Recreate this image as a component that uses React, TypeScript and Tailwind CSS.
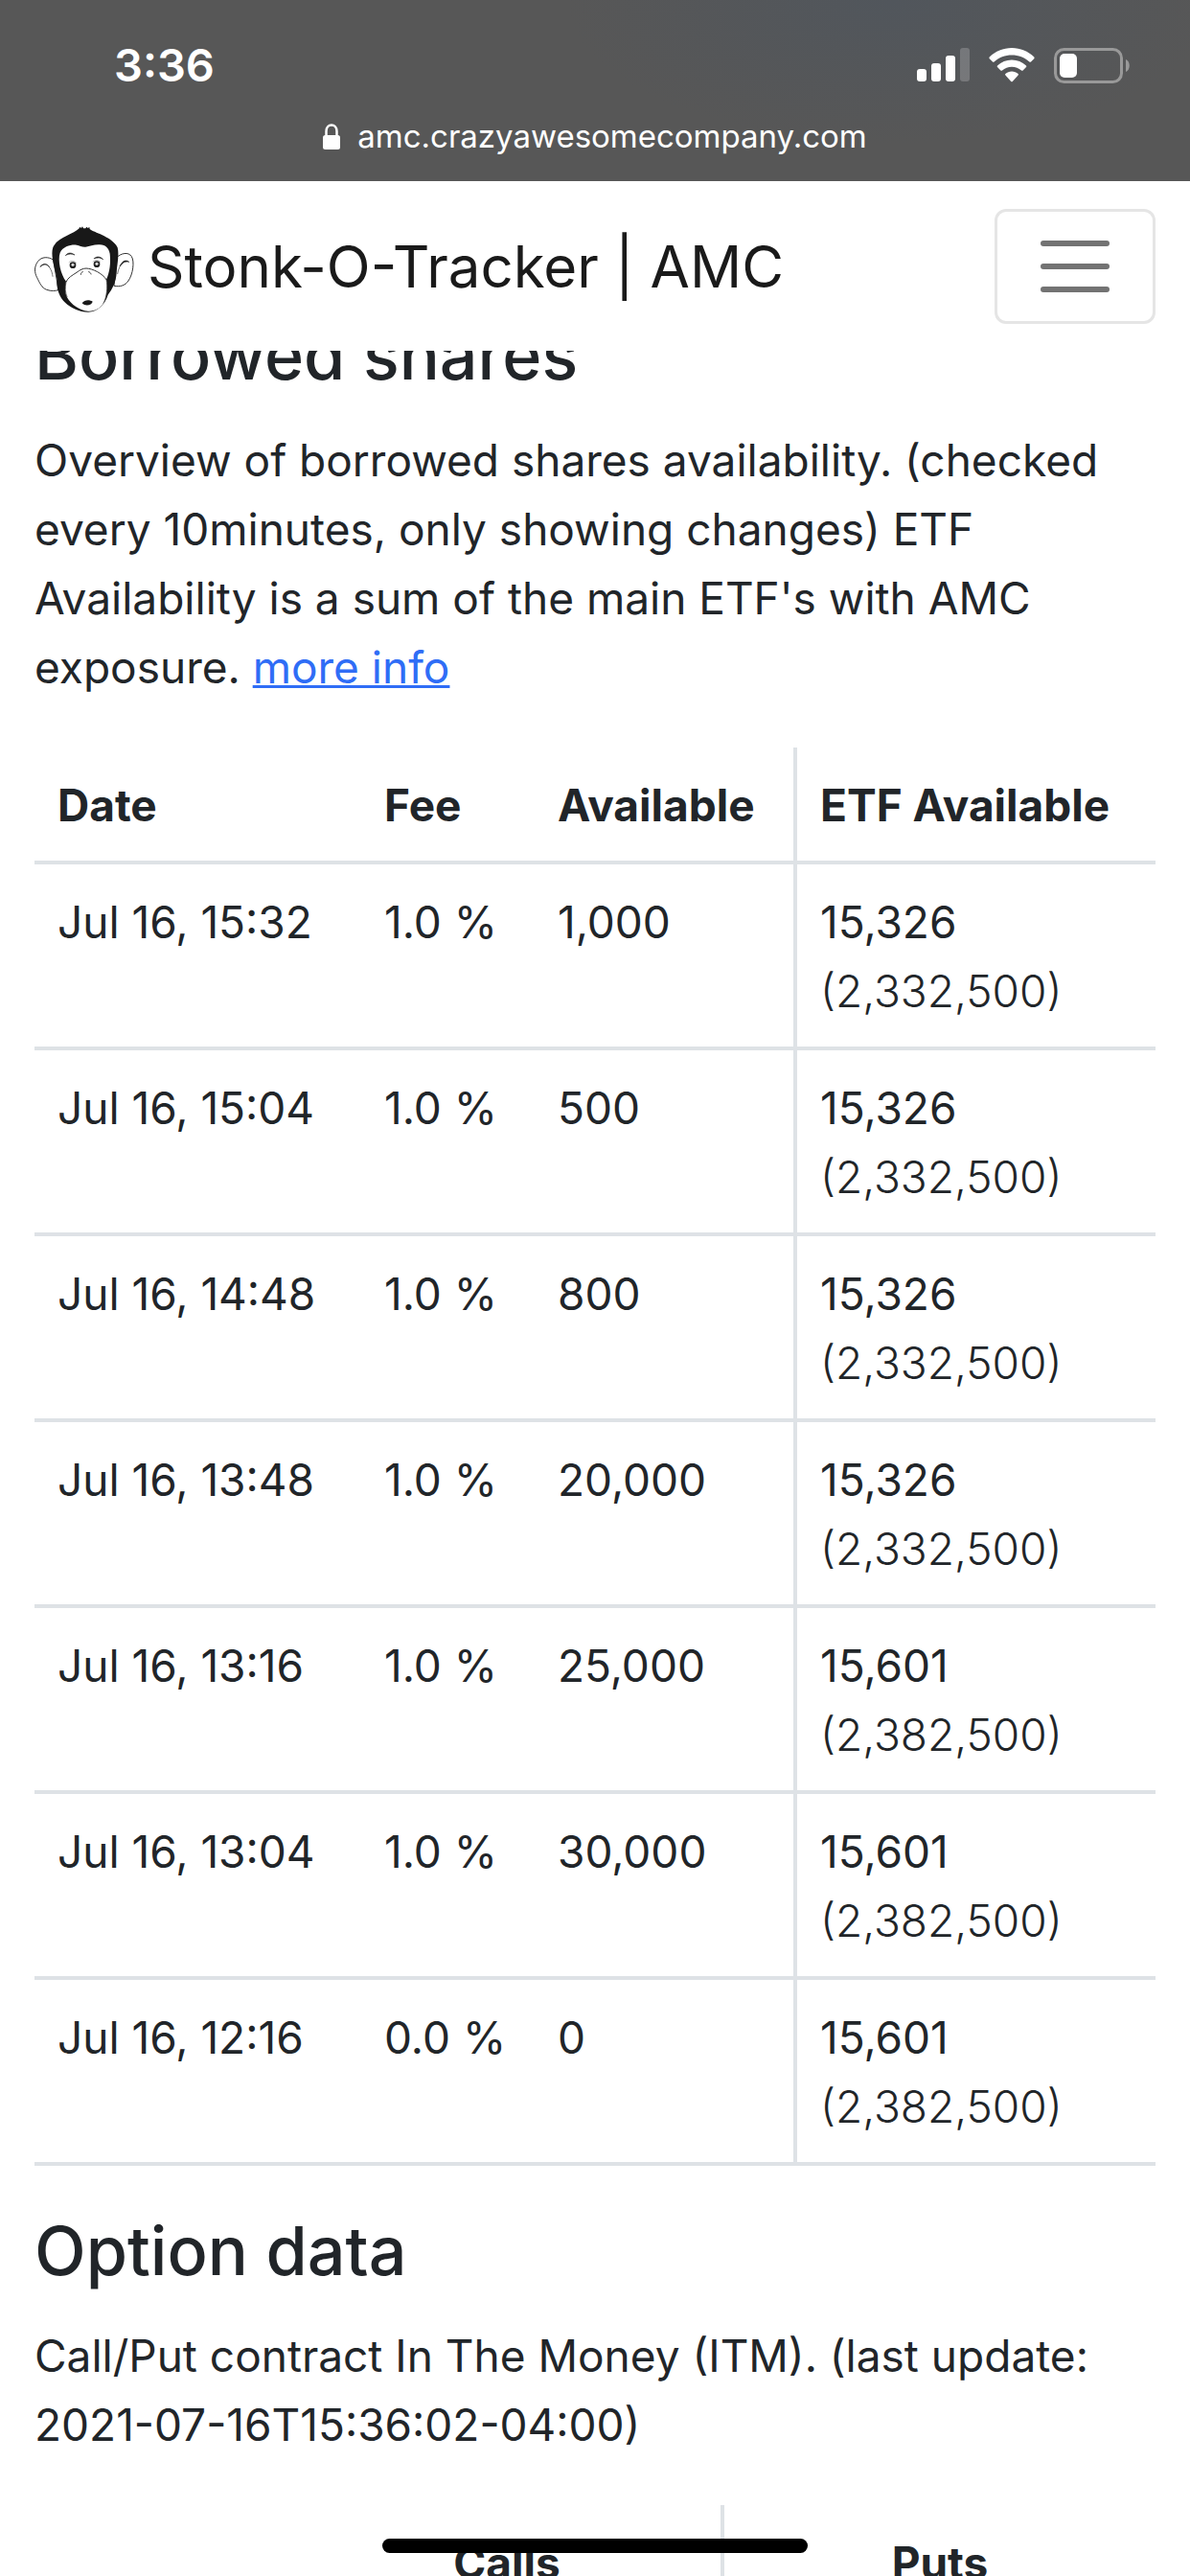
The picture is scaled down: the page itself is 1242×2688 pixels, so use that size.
import React from "react"

type BorrowRow = {
  date: string
  fee: string
  available: string
  etf: string
  etfTotal: string
}

const rows: BorrowRow[] = [
  { date: "Jul 16, 15:32", fee: "1.0 %", available: "1,000", etf: "15,326", etfTotal: "(2,332,500)" },
  { date: "Jul 16, 15:04", fee: "1.0 %", available: "500", etf: "15,326", etfTotal: "(2,332,500)" },
  { date: "Jul 16, 14:48", fee: "1.0 %", available: "800", etf: "15,326", etfTotal: "(2,332,500)" },
  { date: "Jul 16, 13:48", fee: "1.0 %", available: "20,000", etf: "15,326", etfTotal: "(2,332,500)" },
  { date: "Jul 16, 13:16", fee: "1.0 %", available: "25,000", etf: "15,601", etfTotal: "(2,382,500)" },
  { date: "Jul 16, 13:04", fee: "1.0 %", available: "30,000", etf: "15,601", etfTotal: "(2,382,500)" },
  { date: "Jul 16, 12:16", fee: "0.0 %", available: "0", etf: "15,601", etfTotal: "(2,382,500)" },
]

const SignalIcon = () => (
  <svg width="55" height="36" viewBox="0 0 55 36" fill="#fff">
    <rect x="0" y="22" width="10" height="13" rx="3" />
    <rect x="15" y="16" width="10" height="19" rx="3" />
    <rect x="30" y="8" width="10" height="27" rx="3" />
    <rect x="45" y="0" width="10" height="35" rx="3" fillOpacity="0.2" />
  </svg>
)

const WifiIcon = () => (
  <svg width="48" height="36" viewBox="0 0 48 36" fill="#fff">
    <path d="M24 0C33 0 41 3.500 47.300 9.500Q48 10.300 47.300 11.200L44 14.500Q43.200 15.200 42.400 14.500C37.500 10 31 7.500 24 7.500S10.500 10 5.600 14.500Q4.800 15.200 4 14.500L.7 11.200Q0 10.300 .7 9.500C7 3.500 15 0 24 0Z" />
    <path d="M24 12.500C29.700 12.500 35 14.600 39 18.500Q39.800 19.300 39 20.100L35.600 23.500Q34.800 24.200 34 23.500C31.300 21.200 27.800 19.800 24 19.800S16.700 21.200 14 23.500Q13.200 24.200 12.400 23.500L9 20.100Q8.200 19.300 9 18.500C13 14.600 18.300 12.500 24 12.500Z" />
    <path d="M24 24.500C26.500 24.500 28.800 25.400 30.600 27Q31.400 27.800 30.600 28.600L24.800 34.900Q24 35.700 23.200 34.900L17.400 28.600Q16.600 27.800 17.400 27C19.200 25.400 21.500 24.500 24 24.500Z" />
  </svg>
)

const BatteryIcon = () => (
  <svg width="80" height="37" viewBox="0 0 80 37">
    <rect x="1.500" y="1.500" width="69" height="34" rx="9" fill="none" stroke="#999" strokeWidth="3" />
    <path d="M75 12C80 14 80 23 75 25Z" fill="#999" />
    <rect x="6" y="6" width="18" height="25" rx="5" fill="#fff" />
  </svg>
)

const LockIcon = () => (
  <svg width="18" height="27" viewBox="0 0 18 27">
    <path d="M3.500 13V8C3.500 -.8 14.500 -.8 14.500 8V13" fill="none" stroke="#fff" strokeWidth="2.500" />
    <rect x="0" y="12" width="18" height="15" rx="2.500" fill="#fff" />
  </svg>
)

const Logo = () => (
  <svg width="104" height="92" viewBox="18 39 312 276" fill="none" stroke="#333" strokeWidth="3" strokeLinecap="round">
    {/* ears */}
    <path fill="#fff" d="M76 144C62 134 40 134 29 149C17 164 17 184 26 200C34 216 40 232 56 238C70 243 84 242 92 239Z" />
    <path fill="#fff" d="M277 136C288 124 312 118 322 134C332 150 326 190 312 210C302 225 285 230 268 226Z" />
    <path d="M36 166C46 152 58 158 65 168C72 178 74 188 75 196" strokeWidth="2" />
    <path d="M37 165C48 154 58 158 64 166" stroke="#181818" strokeWidth="3" />
    <path d="M278 188C280 172 288 158 297 152" strokeWidth="2" />
    <path d="M286 163C294 146 304 144 314 151C303 148 294 152 286 163Z" fill="#181818" stroke="#181818" strokeWidth="2" />
    {/* hair */}
    <path
      fill="#181818"
      stroke="none"
      d="M76 105C90 74 140 64 158 46L160 41L164 45L168 40L171 46L178 46L181 41L185 45L190 42L191 48C206 60 262 72 278 106C284 130 276 160 275 185C273 215 262 235 248 254C240 282 215 308 186 308C160 308 130 294 114 278C94 258 87 235 88 205C86 180 66 135 76 105Z"
    />
    {/* face */}
    <path
      fill="#fff"
      stroke="none"
      d="M98 122C108 101 134 96 150 98C160 99 166 105 178 104C192 103 204 96 222 97C242 98 250 108 254 125C257 155 254 182 243 206C248 230 244 262 234 280C222 298 206 306 186 305C160 304 132 284 120 262C112 244 114 228 117 212C100 190 90 146 98 122Z"
    />
    <path d="M117 213C122 200 138 192 150 184C160 176 170 171 180 171C200 172 230 186 243 206" />
    <path d="M117 213C113 232 114 246 120 260M243 206C248 230 244 262 234 280" strokeWidth="2" />
    {/* brows and eyes */}
    <path d="M116 130C124 120 134 122 144 129C134 125 126 125 116 130Z" fill="#181818" strokeWidth="2" />
    <path d="M205 140C212 134 222 132 233 143C224 137 216 137 205 140Z" fill="#181818" strokeWidth="2" />
    <circle cx="138" cy="161" r="10" fill="#222" stroke="none" />
    <circle cx="138" cy="160" r="4" fill="#fff" stroke="#aaa" strokeWidth="2" />
    <circle cx="213" cy="158" r="10" fill="#222" stroke="none" />
    <circle cx="213" cy="157" r="4" fill="#fff" stroke="#aaa" strokeWidth="2" />
    <path d="M126 152C132 146 142 146 149 154M201 150C208 144 218 144 224 151" strokeWidth="1" />
    {/* nose and mouth */}
    <path d="M163 190C163 186 165 183 169 182M188 182C192 183 194 186 195 189" strokeWidth="3" />
    <path d="M167 280C174 269 190 268 200 275C198 286 178 292 167 280Z" fill="#181818" stroke="none" />
  </svg>
)

const StatusBar = () => (
  <div className="bg-[#575757] bg-[radial-gradient(ellipse_340px_150px_at_75%_0,#51565c,#575757)] text-white">
    <div className="flex h-28 items-center justify-between pl-[119px] pr-[62px] pt-6">
      <span className="text-[47px] font-semibold leading-[48px]">3:36</span>
      <div className="flex items-center gap-5">
        <SignalIcon />
        <WifiIcon />
        <BatteryIcon />
      </div>
    </div>
    <div className="flex h-[77px] items-start justify-center gap-[18px] pt-[6px]">
      <div className="flex h-12 items-center">
        <LockIcon />
      </div>
      <span className="text-[33px] leading-[48px]">amc.crazyawesomecompany.com</span>
    </div>
  </div>
)

const Header = () => (
  <header className="relative z-10 flex h-[177px] items-center justify-between bg-white px-9">
    <a href="#" className="flex items-center gap-[14px] text-[60px] leading-[90px] text-[#1a1a1a]">
      <div className="pt-2">
        <Logo />
      </div>
      <span>Stonk-O-Tracker | AMC</span>
    </a>
    <button
      aria-label="Toggle navigation"
      className="flex h-[120px] w-[168px] flex-col items-center justify-center gap-[18px] rounded-xl border-3 border-[#e5e5e5]"
    >
      <span className="h-[6px] w-[72px] rounded-full bg-[#737373]" />
      <span className="h-[6px] w-[72px] rounded-full bg-[#737373]" />
      <span className="h-[6px] w-[72px] rounded-full bg-[#737373]" />
    </button>
  </header>
)

const BorrowedTable = () => (
  <table className="mt-12 w-full table-fixed border-separate border-spacing-0 text-left">
    <thead>
      <tr className="[&>th]:border-b-4 [&>th]:border-[#dee2e6] [&>th]:px-6 [&>th]:pt-6 [&>th]:pb-[22px] [&>th]:font-bold">
        <th className="w-[341px]">Date</th>
        <th className="w-[181px]">Fee</th>
        <th className="w-[274px] border-r-4">Available</th>
        <th>ETF Available</th>
      </tr>
    </thead>
    <tbody>
      {rows.map((row) => (
        <tr
          key={row.date}
          className="align-top [&>td]:border-b-4 [&>td]:border-[#dee2e6] [&>td]:px-6 [&>td]:pt-6 [&>td]:pb-[22px]"
        >
          <td>{row.date}</td>
          <td>{row.fee}</td>
          <td className="border-r-4">{row.available}</td>
          <td>
            {row.etf}
            <br />
            <span className="font-light">{row.etfTotal}</span>
          </td>
        </tr>
      ))}
    </tbody>
  </table>
)

const OptionTable = () => (
  <table className="mt-12 w-full table-fixed border-separate border-spacing-0 text-center">
    <thead>
      <tr className="[&>th]:border-[#dee2e6] [&>th]:py-6 [&>th]:font-bold">
        <td className="w-[270px]" />
        <th className="border-r-4">Calls</th>
        <th>Puts</th>
      </tr>
    </thead>
  </table>
)

const App = () => {
  return (
    <div className="relative h-screen overflow-hidden bg-white font-['Inter',sans-serif] text-[46px] leading-[72px] text-[#212529]">
      <StatusBar />
      <Header />
      <main className="-mt-10 px-9">
        <h2 className="mb-7 text-[70px] font-medium leading-[90px]">Borrowed shares</h2>
        <p>
          Overview of borrowed shares availability. (checked every 10minutes, only showing changes) ETF
          Availability is a sum of the main ETF's with AMC exposure.{" "}
          <a href="#" className="text-[#2f6df6] underline decoration-3">
            more info
          </a>
        </p>
        <BorrowedTable />
        <h2 className="mt-11 mb-7 text-[70px] font-medium leading-[90px]">Option data</h2>
        <p>Call/Put contract In The Money (ITM). (last update: 2021-07-16T15:36:02-04:00)</p>
        <OptionTable />
      </main>
      {/* home indicator */}
      <div className="absolute bottom-6 left-1/2 z-20 h-[15px] w-[444px] -translate-x-1/2 rounded-full bg-black" />
    </div>
  )
}

export default App
